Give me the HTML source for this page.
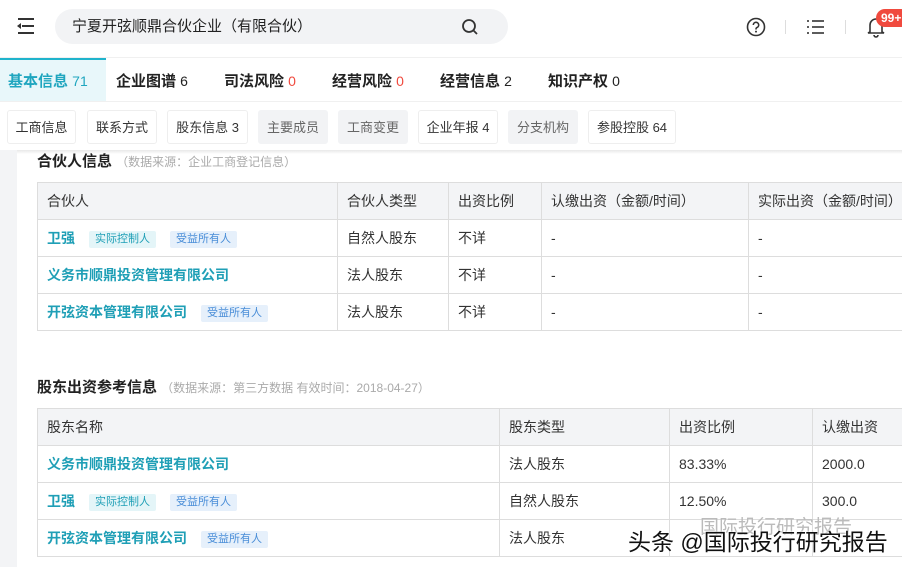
<!DOCTYPE html>
<html><head><meta charset="utf-8"><style>
*{margin:0;padding:0;box-sizing:border-box}
body{width:902px;height:567px;overflow:hidden;background:#fff;font-family:"Liberation Sans","Noto Sans CJK SC",sans-serif;color:#333;position:relative}
.a{position:absolute}
.side{left:0;top:150px;width:17px;height:417px;background:#f3f4f6}
.search{left:55px;top:9px;width:453px;height:35px;background:#f2f3f5;border-radius:18px;font-size:15px;line-height:35px;padding-left:17px;color:#222}
.tab{top:58px;height:43px;line-height:46px;font-size:15px;font-weight:bold;color:#222}
.tab span{font-weight:normal;font-size:14px}
.red{color:#f04a3e}
.sub{top:110px;height:34px;line-height:34px;font-size:13px;border:1px solid #eee;border-radius:3px;text-align:center;color:#333;background:#fff}
.sub.g{background:#f2f3f5;border-color:#f2f3f5;color:#666}
.title{font-size:15px;font-weight:bold;color:#222}
.title span{font-weight:normal;font-size:12px;color:#aaa}
table{position:absolute;border-collapse:collapse;font-size:14px;table-layout:fixed}
td{border:1px solid #ddd;height:37px;padding-left:9px;color:#333;white-space:nowrap;overflow:hidden}
tr.h td{background:#f3f4f6}
.l{color:#1f9fb6;font-weight:bold}
.tg{display:inline-block;font-size:11px;padding:0 6px;line-height:17px;border-radius:2px;margin-left:14px;vertical-align:1px}
.t1{background:#e4f5f8;color:#1f9fb6}
.t2{background:#e6f0fb;color:#4a8ed8}
</style></head><body>
<div class="a" style="left:0;top:0;width:902px;height:55px;background:#fff"></div>
<svg class="a" style="left:16px;top:17px" width="20" height="18"><g stroke="#333" stroke-width="2"><line x1="2" y1="2" x2="18" y2="2"/><line x1="6" y1="9" x2="18" y2="9"/><line x1="2" y1="16" x2="18" y2="16"/></g><path d="M5 6 L1 9 L5 12" fill="#333"/></svg>
<div class="a search">宁夏开弦顺鼎合伙企业（有限合伙）</div>
<svg class="a" style="left:461px;top:18px" width="18" height="18"><circle cx="8" cy="8" r="6" stroke="#333" stroke-width="1.8" fill="none"/><line x1="12.5" y1="12.5" x2="16" y2="16" stroke="#333" stroke-width="1.8"/></svg>
<svg class="a" style="left:746px;top:17px" width="20" height="20"><circle cx="10" cy="10" r="8.5" stroke="#333" stroke-width="1.6" fill="none"/><path d="M7.3 8a2.7 2.7 0 1 1 3.5 2.6c-.6.3-.8.7-.8 1.4v.5" stroke="#333" stroke-width="1.6" fill="none"/><circle cx="10" cy="14.6" r="1" fill="#333"/></svg>
<div class="a" style="left:785px;top:20px;width:1px;height:14px;background:#ddd"></div>
<svg class="a" style="left:807px;top:19px" width="18" height="16"><g stroke="#333" stroke-width="1.6"><line x1="0" y1="2" x2="2" y2="2"/><line x1="5" y1="2" x2="17" y2="2"/><line x1="0" y1="8" x2="2" y2="8"/><line x1="5" y1="8" x2="17" y2="8"/><line x1="0" y1="14" x2="2" y2="14"/><line x1="5" y1="14" x2="17" y2="14"/></g></svg>
<div class="a" style="left:845px;top:20px;width:1px;height:14px;background:#ddd"></div>
<svg class="a" style="left:866px;top:16px" width="20" height="22"><path d="M4 16V9a6 6 0 0 1 12 0v7l2 1H2z" stroke="#333" stroke-width="1.6" fill="none"/><path d="M8 19a2 2 0 0 0 4 0" stroke="#333" stroke-width="1.6" fill="none"/></svg>
<div class="a" style="left:876px;top:9px;width:34px;height:18px;background:#f04a3e;border-radius:9px;color:#fff;font-size:12px;font-weight:bold;line-height:18px;padding-left:5px">99+</div>
<div class="a" style="left:0;top:57px;width:902px;height:1px;background:#f0f0f0"></div>
<div class="a" style="left:0;top:58px;width:106px;height:43px;background:#e8f7fa;border-top:2px solid #1fb3cc"></div>
<div class="a tab" style="left:8px;color:#1fa6bf">基本信息 <span>71</span></div>
<div class="a tab" style="left:116px">企业图谱 <span>6</span></div>
<div class="a tab" style="left:224px">司法风险 <span class="red">0</span></div>
<div class="a tab" style="left:332px">经营风险 <span class="red">0</span></div>
<div class="a tab" style="left:440px">经营信息 <span>2</span></div>
<div class="a tab" style="left:548px">知识产权 <span>0</span></div>
<div class="a" style="left:0;top:101px;width:902px;height:1px;background:#f0f0f0"></div>
<div class="a sub" style="left:7px;width:69px">工商信息</div>
<div class="a sub" style="left:87px;width:70px">联系方式</div>
<div class="a sub" style="left:167px;width:81px">股东信息 3</div>
<div class="a sub g" style="left:258px;width:70px">主要成员</div>
<div class="a sub g" style="left:338px;width:70px">工商变更</div>
<div class="a sub" style="left:418px;width:80px">企业年报 4</div>
<div class="a sub g" style="left:508px;width:70px">分支机构</div>
<div class="a sub" style="left:588px;width:88px">参股控股 64</div>
<div class="a" style="left:0;top:150px;width:902px;height:4px;background:linear-gradient(#e8e8e8,#fff)"></div>
<div class="a side"></div>
<div class="a title" style="left:37px;top:150px">合伙人信息 <span>（数据来源：企业工商登记信息）</span></div>
<table style="left:37px;top:182px;width:880px">
<colgroup><col style="width:300px"><col style="width:111px"><col style="width:93px"><col style="width:207px"><col style="width:169px"></colgroup>
<tr class="h"><td>合伙人</td><td>合伙人类型</td><td>出资比例</td><td>认缴出资（金额/时间）</td><td>实际出资（金额/时间）</td></tr>
<tr><td><span class="l">卫强</span><span class="tg t1">实际控制人</span><span class="tg t2">受益所有人</span></td><td>自然人股东</td><td>不详</td><td>-</td><td>-</td></tr>
<tr><td><span class="l">义务市顺鼎投资管理有限公司</span></td><td>法人股东</td><td>不详</td><td>-</td><td>-</td></tr>
<tr><td><span class="l">开弦资本管理有限公司</span><span class="tg t2">受益所有人</span></td><td>法人股东</td><td>不详</td><td>-</td><td>-</td></tr>
</table>
<div class="a title" style="left:37px;top:376px">股东出资参考信息 <span>（数据来源：第三方数据 有效时间：2018-04-27）</span></div>
<table style="left:37px;top:408px;width:880px">
<colgroup><col style="width:462px"><col style="width:170px"><col style="width:143px"><col style="width:105px"></colgroup>
<tr class="h"><td>股东名称</td><td>股东类型</td><td>出资比例</td><td>认缴出资</td></tr>
<tr><td><span class="l">义务市顺鼎投资管理有限公司</span></td><td>法人股东</td><td>83.33%</td><td>2000.0</td></tr>
<tr><td><span class="l">卫强</span><span class="tg t1">实际控制人</span><span class="tg t2">受益所有人</span></td><td>自然人股东</td><td>12.50%</td><td>300.0</td></tr>
<tr><td><span class="l">开弦资本管理有限公司</span><span class="tg t2">受益所有人</span></td><td>法人股东</td><td></td><td></td></tr>
</table>
<div class="a" style="left:700px;top:512px;font-size:19px;color:#bbb">国际投行研究报告</div>
<div class="a" style="left:628px;top:523px;font-size:23px;color:#111;text-shadow:0 0 2px #fff,0 0 2px #fff">头条 @国际投行研究报告</div>
</body></html>
